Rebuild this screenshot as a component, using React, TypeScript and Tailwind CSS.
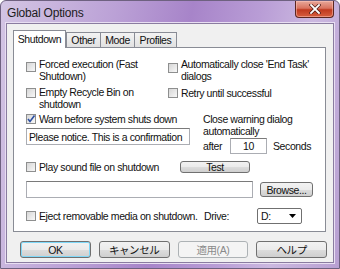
import React from 'react';

const Check = ({ checked }: { checked?: boolean }) => (
  <span className="relative block shrink-0 w-[10px] h-[10px] border border-[#8e8f8f] bg-[linear-gradient(135deg,#d6d6d6,#f8f8f8)]">
    {checked && (
      <svg viewBox="0 0 10 10" className="absolute left-[-1px] top-[-1px] w-[10px] h-[10px]">
        <path d="M2 5 L4 7.5 L8.5 1.5" fill="none" stroke="#2b4fa3" strokeWidth="1.6" />
      </svg>
    )}
  </span>
);

const Btn = ({ children, className = '' }: { children: React.ReactNode; className?: string }) => (
  <div
    className={`flex items-center justify-center rounded-[3px] border border-[#707070] bg-[linear-gradient(#f2f2f2_0%,#ebebeb_50%,#dddddd_51%,#cfcfcf_100%)] ${className}`}
  >
    {children}
  </div>
);

export default function App() {
  return (
    <div className="w-[340px] h-[269px] font-['Liberation_Sans','Noto_Sans_CJK_JP',sans-serif] text-[10.5px] leading-[12px] tracking-[-0.4px] text-[#111]">
      {/* window frame */}
      <div className="w-full h-full flex flex-col rounded-t-[6px] border border-[#6e6180] bg-[linear-gradient(100deg,#d3c5e4_0%,#bba1d6_30%,#a784c9_50%,#b99dd6_68%,#cbb8e0_82%,#b8a0d2_100%)] px-[5px] pb-[5px]">
        {/* title bar */}
        <div className="flex justify-between items-start h-[22px]">
          <span className="self-center pl-[1px] pt-[1px] text-[12px] tracking-[-0.2px] text-[#1c1c1c]">Global Options</span>
          <div className="relative w-[39px] h-[17px] rounded-b-[4px] border border-t-0 border-[#5b2620] bg-[linear-gradient(#e8a89a_0%,#d9735f_45%,#c0391f_55%,#d65e3e_100%)] shadow-[inset_0_0_0_1px_rgba(255,200,190,0.5)] flex items-center justify-center">
            <svg viewBox="0 0 12 10" className="w-[12px] h-[10px]">
              <path d="M2 1 L10 9 M10 1 L2 9" stroke="#4a1a14" strokeWidth="3.2" strokeLinecap="square" />
              <path d="M2 1 L10 9 M10 1 L2 9" stroke="#ffffff" strokeWidth="1.8" strokeLinecap="square" />
            </svg>
          </div>
        </div>

        {/* client area */}
        <div className="flex-1 flex flex-col border border-[#8a7ca0] shadow-[0_0_0_1px_#e8def2] bg-[#f0f0f0] px-[6px] pt-[6px]">
          {/* tabs */}
          <div className="flex items-end h-[17px]">
            <div className="relative z-10 w-[53px] h-[18px] -mb-[1px] border border-b-0 border-[#898c95] bg-white flex items-center justify-center pb-[2px]">
              Shutdown
            </div>
            <div className="w-[35px] h-[15px] border border-b-0 border-[#898c95] bg-[linear-gradient(#f3f3f3,#e1e1e1)] flex items-center justify-center">
              Other
            </div>
            <div className="w-[35px] h-[15px] -ml-[1px] border border-b-0 border-[#898c95] bg-[linear-gradient(#f3f3f3,#e1e1e1)] flex items-center justify-center">
              Mode
            </div>
            <div className="w-[43px] h-[15px] -ml-[1px] border border-b-0 border-[#898c95] bg-[linear-gradient(#f3f3f3,#e1e1e1)] flex items-center justify-center">
              Profiles
            </div>
          </div>

          {/* tab page */}
          <div className="w-[313px] h-[185px] border border-[#898c95] bg-white pl-[12px] pt-[10px] flex flex-col">
            {/* row 1 */}
            <div className="flex">
              <div className="w-[142px] flex items-start gap-[3px]">
                <span className="mt-[4px]"><Check /></span>
                <span className="whitespace-nowrap">Forced execution (Fast<br />Shutdown)</span>
              </div>
              <div className="flex items-start gap-[3px]">
                <span className="mt-[5px]"><Check /></span>
                <span className="whitespace-nowrap">Automatically close 'End Task'<br />dialogs</span>
              </div>
            </div>

            {/* row 2 */}
            <div className="flex mt-[4px]">
              <div className="w-[142px] flex items-start gap-[3px]">
                <span className="mt-[2px]"><Check /></span>
                <span className="whitespace-nowrap">Empty Recycle Bin on<br />shutdown</span>
              </div>
              <div className="flex items-center gap-[3px] h-[14px]">
                <Check />
                <span className="whitespace-nowrap">Retry until successful</span>
              </div>
            </div>

            {/* row 3 */}
            <div className="flex mt-[3px]">
              <div className="w-[177px] flex flex-col">
                <div className="flex items-center gap-[3px] h-[12px]">
                  <Check checked />
                  <span className="whitespace-nowrap">Warn before system shuts down</span>
                </div>
                <div className="mt-[3px] w-[164px] h-[17px] border border-[#abadb3] border-t-[#7a7a7a] pl-[2px] flex items-center overflow-hidden whitespace-nowrap">
                  Please notice. This is a confirmation
                </div>
              </div>
              <div className="flex flex-col">
                <span className="whitespace-nowrap">Close warning dialog<br />automatically</span>
                <div className="flex items-center mt-[1px]">
                  <span>after</span>
                  <div className="ml-[8px] w-[37px] h-[16px] border border-[#abadb3] border-t-[#7a7a7a] flex items-center justify-center">10</div>
                  <span className="ml-[6px]">Seconds</span>
                </div>
              </div>
            </div>

            {/* play sound */}
            <div className="flex items-center h-[12px] mt-[7px]">
              <div className="w-[154px] flex items-center gap-[3px]">
                <Check />
                <span className="whitespace-nowrap">Play sound file on shutdown</span>
              </div>
              <Btn className="w-[70px] h-[12px]">Test</Btn>
            </div>

            {/* file */}
            <div className="flex items-center mt-[8px]">
              <div className="w-[227px] h-[17px] border border-[#abadb3] border-t-[#7a7a7a]" />
              <Btn className="ml-[7px] w-[53px] h-[15px]">Browse...</Btn>
            </div>

            {/* eject */}
            <div className="flex items-center h-[16px] mt-[10px]">
              <div className="w-[178px] flex items-center gap-[3px]">
                <Check />
                <span className="whitespace-nowrap">Eject removable media on shutdown.</span>
              </div>
              <span>Drive:</span>
              <div className="ml-[28px] w-[45px] h-[16px] border border-[#707070] rounded-[2px] bg-white flex items-center justify-between pl-[3px] pr-[5px]">
                <span>D:</span>
                <svg viewBox="0 0 7 4" className="w-[7px] h-[4px]">
                  <path d="M0 0 L7 0 L3.5 4 Z" fill="#000" />
                </svg>
              </div>
            </div>
          </div>

          {/* buttons */}
          <div className="flex gap-[8px] mt-[9px] pl-[7px]">
            <Btn className="w-[71px] h-[17px] border-[#3c7fb1] shadow-[inset_0_0_0_1px_#7fd8f8]">OK</Btn>
            <Btn className="w-[71px] h-[17px]">キャンセル</Btn>
            <div className="w-[71px] h-[17px] rounded-[3px] border border-[#adb2b5] bg-[#f4f4f4] text-[#8a8a8a] flex items-center justify-center">適用(A)</div>
            <Btn className="w-[71px] h-[17px]">ヘルプ</Btn>
          </div>
        </div>
      </div>
    </div>
  );
}
